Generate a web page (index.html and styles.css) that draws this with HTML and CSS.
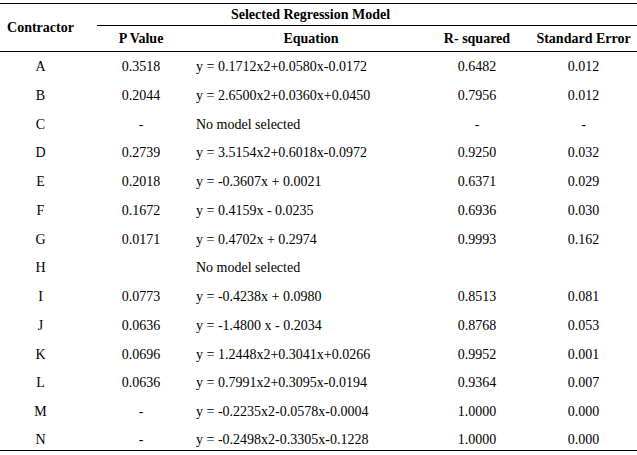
FILE: index.html
```html
<!DOCTYPE html>
<html>
<head>
<meta charset="utf-8">
<link rel="stylesheet" href="styles.css">
</head>
<body>
<table class="reg">
  <colgroup>
    <col class="c1"><col class="c2"><col class="c3"><col class="c4"><col class="c5">
  </colgroup>
  <thead>
    <tr class="h1">
      <th rowspan="2" class="contractor">Contractor</th>
      <th colspan="4" class="group">Selected Regression Model</th>
    </tr>
    <tr class="h2">
      <th>P Value</th>
      <th>Equation</th>
      <th>R- squared</th>
      <th class="se">Standard Error</th>
    </tr>
  </thead>
  <tbody>
    <tr><td class="name">A</td><td>0.3518</td><td class="eq">y = 0.1712x2+0.0580x-0.0172</td><td>0.6482</td><td class="se">0.012</td></tr>
    <tr><td class="name">B</td><td>0.2044</td><td class="eq">y = 2.6500x2+0.0360x+0.0450</td><td>0.7956</td><td class="se">0.012</td></tr>
    <tr><td class="name">C</td><td>-</td><td class="eq">No model selected</td><td>-</td><td class="se">-</td></tr>
    <tr><td class="name">D</td><td>0.2739</td><td class="eq">y = 3.5154x2+0.6018x-0.0972</td><td>0.9250</td><td class="se">0.032</td></tr>
    <tr><td class="name">E</td><td>0.2018</td><td class="eq">y = -0.3607x + 0.0021</td><td>0.6371</td><td class="se">0.029</td></tr>
    <tr><td class="name">F</td><td>0.1672</td><td class="eq">y = 0.4159x - 0.0235</td><td>0.6936</td><td class="se">0.030</td></tr>
    <tr><td class="name">G</td><td>0.0171</td><td class="eq">y = 0.4702x + 0.2974</td><td>0.9993</td><td class="se">0.162</td></tr>
    <tr><td class="name">H</td><td></td><td class="eq">No model selected</td><td></td><td class="se"></td></tr>
    <tr><td class="name">I</td><td>0.0773</td><td class="eq">y = -0.4238x + 0.0980</td><td>0.8513</td><td class="se">0.081</td></tr>
    <tr><td class="name">J</td><td>0.0636</td><td class="eq">y = -1.4800 x - 0.2034</td><td>0.8768</td><td class="se">0.053</td></tr>
    <tr><td class="name">K</td><td>0.0696</td><td class="eq">y = 1.2448x2+0.3041x+0.0266</td><td>0.9952</td><td class="se">0.001</td></tr>
    <tr><td class="name">L</td><td>0.0636</td><td class="eq">y = 0.7991x2+0.3095x-0.0194</td><td>0.9364</td><td class="se">0.007</td></tr>
    <tr><td class="name">M</td><td>-</td><td class="eq">y = -0.2235x2-0.0578x-0.0004</td><td>1.0000</td><td class="se">0.000</td></tr>
    <tr class="last"><td class="name">N</td><td>-</td><td class="eq">y = -0.2498x2-0.3305x-0.1228</td><td>1.0000</td><td class="se">0.000</td></tr>
  </tbody>
</table>
</body>
</html>
```

FILE: styles.css
```css
html, body {
  margin: 0;
  padding: 0;
  background: #fff;
}
body {
  padding-top: 3px;
  font-family: "Liberation Serif", "Times New Roman", serif;
  font-size: 14px;
  color: #000;
}
.reg {
  width: 637px;
  table-layout: fixed;
  border-collapse: separate;
  border-spacing: 0;
  border-top: 1px solid #000;
}
.c1 { width: 97px; }
.c2 { width: 88px; }
.c3 { width: 252px; }
.c4 { width: 80px; }
.c5 { width: 120px; }

.reg th, .reg td {
  padding: 0;
  box-sizing: border-box;
  text-align: center;
  vertical-align: middle;
  line-height: 16px;
  white-space: nowrap;
}
.reg th {
  font-weight: bold;
}
.h1 th {
  height: 22px;
}
.h1 .group {
  border-bottom: 1px solid #000;
  padding-right: 113px;
}
.h1 .contractor {
  border-bottom: 1px solid #000;
  padding-right: 16px;
}
.h2 th {
  height: 26px;
  border-bottom: 1px solid #000;
}
.reg tbody td {
  height: 29px;
}
.reg tbody tr:nth-child(4n) td {
  height: 28px;
}
.reg .name {
  padding-right: 16px;
}
.reg td.eq {
  text-align: left;
  padding-left: 11px;
}
.reg .se {
  padding-left: 13px;
}
.reg tbody tr.last td {
  height: 25px;
  padding-top: 3px;
  border-bottom: 1px solid #000;
}
```
